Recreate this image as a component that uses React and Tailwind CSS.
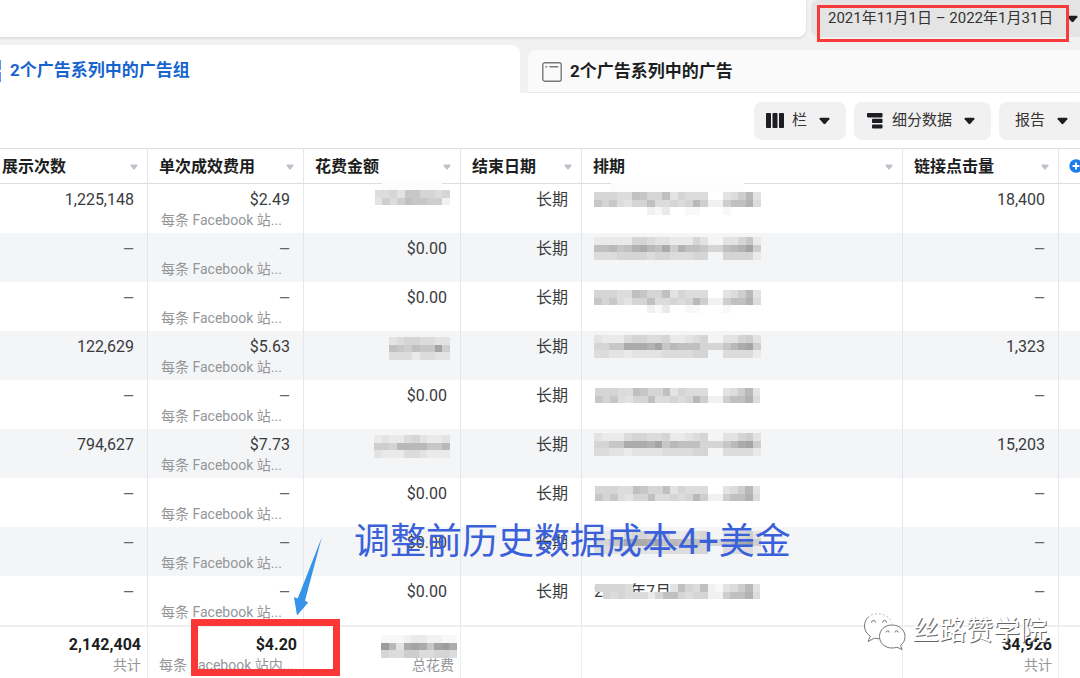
import React from "react";

const FADED = {
  plainTop: "999aa67996b9aaa..ba85b",
  plainLow: "797ab996aa9a958dd8664a",
  plainEdge: ".......dec..ee...e.ff.",
};

const SCHEDULE_PLAIN = [FADED.plainTop, FADED.plainLow];
const SCHEDULE_PLAIN_EDGE = [FADED.plainTop, FADED.plainLow, FADED.plainEdge];
const SCHEDULE_STRIPED = [
  "ccccc99abbccc9b..bb97c",
  "6657643563846679965428",
  "aaa9999a99aaa99..9999c",
];
const SCHEDULE_STRIPED_DARK = [
  "bccca99aa9ccba9..bb98b",
  "9977333427566699975328",
  "aabbcbbbbaaaa99..aaaac",
];
const SCHEDULE_TORN = ["9999a.....b69a6deba85b", ".9a9aaac9669a99dd8664a"];

const SPEND_WIDE = ["aa9b7799a9", "b8a867788d"];
const SPEND_WIDE_STRIPED = ["cbcca9bccb", "8895555775", "bcccaabccc"];
const SPEND_SHORT = ["ba99aabb", "67867728", "aaacaabb"];
const SPEND_TOTAL = ["eeedccddee", "15b3237213", "9aa88aa99a"];

const ROWS = [
  { impressions: "1,225,148", cost: "$2.49", spendMask: SPEND_WIDE, clicks: "18,400", mask: SCHEDULE_PLAIN_EDGE, halo: true },
  { spend: "$0.00", mask: SCHEDULE_STRIPED },
  { spend: "$0.00", mask: SCHEDULE_PLAIN_EDGE },
  { impressions: "122,629", cost: "$5.63", spendMask: SPEND_SHORT, clicks: "1,323", mask: SCHEDULE_STRIPED_DARK },
  { spend: "$0.00", mask: SCHEDULE_PLAIN },
  { impressions: "794,627", cost: "$7.73", spendMask: SPEND_WIDE_STRIPED, clicks: "15,203", mask: SCHEDULE_STRIPED_DARK },
  { spend: "$0.00", mask: SCHEDULE_PLAIN },
  { spend: "$0.00", mask: SCHEDULE_STRIPED_DARK },
  { spend: "$0.00", mask: SCHEDULE_TORN, partial: "2021年7月" },
];

const COLUMNS = ["展示次数", "单次成效费用", "花费金额", "结束日期", "排期", "链接点击量"];

const CELL = 7.6;

function Mosaic({ rows, halo }) {
  const width = rows[0].length * CELL;
  const height = rows.length * CELL;
  return (
    <svg
      className="inline-block overflow-visible align-top"
      width={Math.round(width)}
      height={Math.round(height)}
      viewBox={`0 0 ${width} ${height}`}
      shapeRendering="crispEdges"
      aria-hidden="true"
    >
      {halo && <rect x={width * 0.1} y="-9" width={width * 0.8} height="9" fill="#fcfcfc" />}
      {rows.flatMap((row, y) =>
        [...row].map((c, x) => {
          if (c === ".") return null;
          const v = 150 + parseInt(c, 16) * 7;
          return (
            <rect key={`${x}-${y}`} x={x * CELL} y={y * CELL} width={CELL} height={CELL} fill={`rgb(${v},${v},${v})`} />
          );
        })
      )}
    </svg>
  );
}

function Caret({ small }) {
  return small ? (
    <svg className="shrink-0 text-[#bcc2c9]" width="8" height="6" viewBox="0 0 8 6" aria-hidden="true">
      <path d="M1 .5h6q1 .2.5 1.200L4.700 5.300q-.7.700-1.400 0L.5 1.700Q0 .7 1 .5Z" fill="currentColor" />
    </svg>
  ) : (
    <svg className="shrink-0 text-[#1c1e21]" width="11" height="8" viewBox="0 0 11 8" aria-hidden="true">
      <path d="M1.300.800h8.400q1.300.2.600 1.400L6.400 6.800q-.9.900-1.800 0L.7 2.200Q0 1 1.300.8Z" fill="currentColor" />
    </svg>
  );
}

function Value({ children }) {
  return children ? (
    <div className="text-base leading-5">{children}</div>
  ) : (
    <div className="text-sm leading-5 text-[#606770]">—</div>
  );
}

function ToolButton({ icon, label }) {
  return (
    <button
      type="button"
      className="flex h-[38px] shrink-0 items-center rounded-lg bg-[#f1f1f1] pr-4 pl-3 text-[15px] whitespace-nowrap text-[#333]"
    >
      {icon}
      <span className={icon ? "ml-2" : "ml-1"}>{label}</span>
      <span className="ml-3">
        <Caret />
      </span>
    </button>
  );
}

const line = "border-r border-[#e4e6e9]";
const numeric = `${line} pt-[6px] pr-[13px] text-right align-top`;
const total = "border-t-2 border-r border-[#eceef0] pt-2 pr-[6px] text-right align-top";
const totalNote = "text-sm leading-5 font-normal whitespace-nowrap text-[#939598]";

export default function App() {
  return (
    <div className="relative w-full overflow-hidden bg-[#f1f1f1] font-[Roboto,'Noto_Sans_CJK_SC',sans-serif] text-[#3a3b3d]">
      <header className="flex h-[37px] gap-[5px]">
        <input
          aria-label="搜索"
          className="min-w-0 flex-1 rounded-br-lg bg-white px-3 shadow-[0_1px_3px_rgba(0,0,0,0.12)] outline-none"
        />
        <button
          type="button"
          className="flex w-[269px] shrink-0 items-center gap-[14px] rounded-l-lg bg-[#e4e4e4] pl-[17px] text-[15px] whitespace-nowrap text-[#333]"
        >
          <span>2021年11月1日 – 2022年1月31日</span>
          <Caret />
        </button>
      </header>

      <nav className="mt-2 flex h-12 items-end gap-2">
        <button
          type="button"
          className="flex h-full w-[520px] shrink-0 items-center gap-2 rounded-tr-lg bg-white pt-[3px] text-[17px] font-bold text-[#1763cf]"
        >
          <svg width="2" height="22" viewBox="0 0 2 22" aria-hidden="true">
            <path d="M0 0h1v10H0zM0 12h1v10H0z" fill="#5b97f0" />
          </svg>
          2个广告系列中的广告组
        </button>
        <button
          type="button"
          className="flex h-[43px] min-w-0 flex-1 items-center gap-2 rounded-tl-lg border-b border-[#e6e6e6] bg-[#fafafa] pt-[2px] pl-[14px] text-[17px] font-bold whitespace-nowrap text-[#1c1e21]"
        >
          <svg width="20" height="20" viewBox="0 0 20 20" fill="none" stroke="#77797c" aria-hidden="true">
            <rect x="0.800" y="0.800" width="18.400" height="18.400" rx="2" strokeWidth="1.400" />
            <path d="M3.500 4.700h1.600M7.500 4.700h8.800" strokeWidth="1.500" />
          </svg>
          2个广告系列中的广告
        </button>
      </nav>

      <main className="bg-white">
        <div className="flex h-[55px] items-center justify-end gap-2 overflow-hidden">
          <ToolButton
            label="栏"
            icon={
              <svg width="18" height="15" viewBox="0 0 18 15" fill="#1c1e21" aria-hidden="true">
                <rect width="5" height="15" rx="0.800" />
                <rect x="6.500" width="5" height="15" rx="0.800" />
                <rect x="13" width="5" height="15" rx="0.800" />
              </svg>
            }
          />
          <ToolButton
            label="细分数据"
            icon={
              <svg width="18" height="16" viewBox="0 0 18 16" fill="#1c1e21" aria-hidden="true">
                <rect x="1" y="0" width="15.500" height="4.400" rx="0.800" />
                <rect x="6" y="5.800" width="10.500" height="4.200" rx="0.800" />
                <rect x="6" y="11.400" width="10.500" height="4.200" rx="0.800" />
              </svg>
            }
          />
          <div className="w-[81px] shrink-0">
            <ToolButton label="报告" />
          </div>
        </div>

        <table className="w-full table-fixed border-separate border-spacing-0">
          <colgroup>
            <col className="w-[148px]" />
            <col className="w-[156px]" />
            <col className="w-[157px]" />
            <col className="w-[121px]" />
            <col />
            <col className="w-[156px]" />
            <col className="w-[21px]" />
          </colgroup>
          <thead>
            <tr className="h-9">
              {COLUMNS.map((name, i) => (
                <th
                  key={name}
                  scope="col"
                  className={`border-t border-r border-b border-t-[#dadde1] border-r-[#e4e6e9] border-b-[#dadde1] p-0 pt-[2px] pr-[9px] text-base font-bold text-[#1c1e21] ${i === 0 ? "pl-[2px]" : "pl-[11px]"}`}
                >
                  <div className="flex items-center justify-between leading-5">
                    {name}
                    <Caret small />
                  </div>
                </th>
              ))}
              <th scope="col" className="overflow-hidden border-t border-b border-[#dadde1] p-0 pl-[10px]">
                <button type="button" aria-label="添加列" className="block w-[14px]">
                  <svg width="14" height="14" viewBox="0 0 14 14" aria-hidden="true">
                    <circle cx="7" cy="7" r="6.700" fill="#1b7ced" />
                    <path d="M7 3.600v6.800M3.600 7h6.800" stroke="#fff" strokeWidth="1.900" />
                  </svg>
                </button>
              </th>
            </tr>
          </thead>
          <tbody>
            {ROWS.map((row, i) => (
              <tr key={i} className="h-[49px] even:bg-[#f4f5f7]">
                <td className={numeric}>
                  <Value>{row.impressions}</Value>
                </td>
                <td className={numeric}>
                  <Value>{row.cost}</Value>
                  <div className="pl-[13px] text-left text-sm leading-5 whitespace-nowrap text-[#939598]">每条 Facebook 站...</div>
                </td>
                <td className={numeric}>
                  {row.spendMask ? (
                    <div className="-mr-[3px]">
                      <Mosaic rows={row.spendMask} halo={row.halo} />
                    </div>
                  ) : (
                    <Value>{row.spend}</Value>
                  )}
                </td>
                <td className={numeric}>
                  <Value>长期</Value>
                </td>
                <td className={`${line} relative px-3 align-top ${i % 2 ? "pt-1" : "pt-2"}`}>
                  {row.partial && <div className="absolute top-[6px] left-3 text-base leading-5">{row.partial}</div>}
                  <div className="relative">
                    <Mosaic rows={row.mask} halo={row.halo} />
                  </div>
                </td>
                <td className={numeric}>
                  <Value>{row.clicks}</Value>
                </td>
                <td />
              </tr>
            ))}
          </tbody>
          <tfoot className="text-base leading-5 font-bold text-[#1c1e21]">
            <tr className="h-[53px]">
              <td className={total}>
                <div>2,142,404</div>
                <div className={totalNote}>共计</div>
              </td>
              <td className={total}>
                <div>$4.20</div>
                <div className={`${totalNote} pl-[11px] text-left`}>每条 Facebook 站内...</div>
              </td>
              <td className={total}>
                <div className="-mr-[3px] h-5">
                  <Mosaic rows={SPEND_TOTAL} />
                </div>
                <div className={`${totalNote} relative`}>总花费</div>
              </td>
              <td className={total} />
              <td className={total} />
              <td className={total}>
                <div>34,926</div>
                <div className={totalNote}>共计</div>
              </td>
              <td className="border-t-2 border-[#eceef0]" />
            </tr>
          </tfoot>
        </table>
      </main>

      <div className="absolute top-[5px] left-[817px] h-[37px] w-[252px] border-[3px] border-[#f93a3a]" />
      <div className="absolute top-[619px] left-[191px] h-[57px] w-[149px] border-[7px] border-[#fb3636]" />
      <svg className="absolute top-[537px] left-[293px]" width="30" height="79" viewBox="0 0 30 79" aria-hidden="true">
        <path d="M28.800.3 12 63.800l3.200 1.600L4 78.400 1 60l3.700 1.400Z" fill="#3793e8" />
      </svg>
      <p className="absolute top-[520px] left-[354px] text-[36px] leading-[44px] whitespace-nowrap text-[#3a60da]">
        调整前历史数据成本4+美金
      </p>
      <div className="absolute top-[611px] left-[863px] flex items-center gap-[6px]">
        <svg width="43" height="38" viewBox="0 0 43 38" fill="#fff" stroke="#777" strokeWidth="1" aria-hidden="true">
          <path
            d="M15 1.500C7.500 1.500 1.500 6.800 1.500 14c0 4.300 2.300 7.800 5.800 10.200L5 29.500l6.600-3.400c1.400.4 3 .6 4.600.6C15.800 19 21 13.500 29.600 13.200 28.500 6.300 22.500 1.500 15 1.500Z"
            stroke="none"
          />
          <path d="M6 4.500C3 7 1.500 10.300 1.500 14c0 4.300 2.300 7.800 5.800 10.200L5 29.500l6.600-3.400c1.400.4 3 .6 4.600.6" fill="none" />
          <path d="M8 3.200C15 0 25 1.500 28.800 10.500" fill="none" stroke="#bbb" strokeDasharray="2 2" />
          <path d="M29 13C21.800 13 16.500 18 16.500 24.500S21.800 36 29 36c1.800 0 3.400-.2 5-.8l5 2.300-1.400-4.100c2.800-2.200 4.400-5.200 4.400-8.900C42 18 36.200 13 29 13Z" />
          <path d="M8.500 10.500a2 2 0 0 1 4 0M19.500 10.500a2 2 0 0 1 4 0M23 20.500a1.700 1.700 0 0 1 3.400 0M32 20.500a1.700 1.700 0 0 1 3.400 0" fill="none" />
        </svg>
        <span className="text-[27px] leading-10 whitespace-nowrap text-white [text-shadow:1px_1px_0_#666]">丝路赞学院</span>
      </div>
    </div>
  );
}
